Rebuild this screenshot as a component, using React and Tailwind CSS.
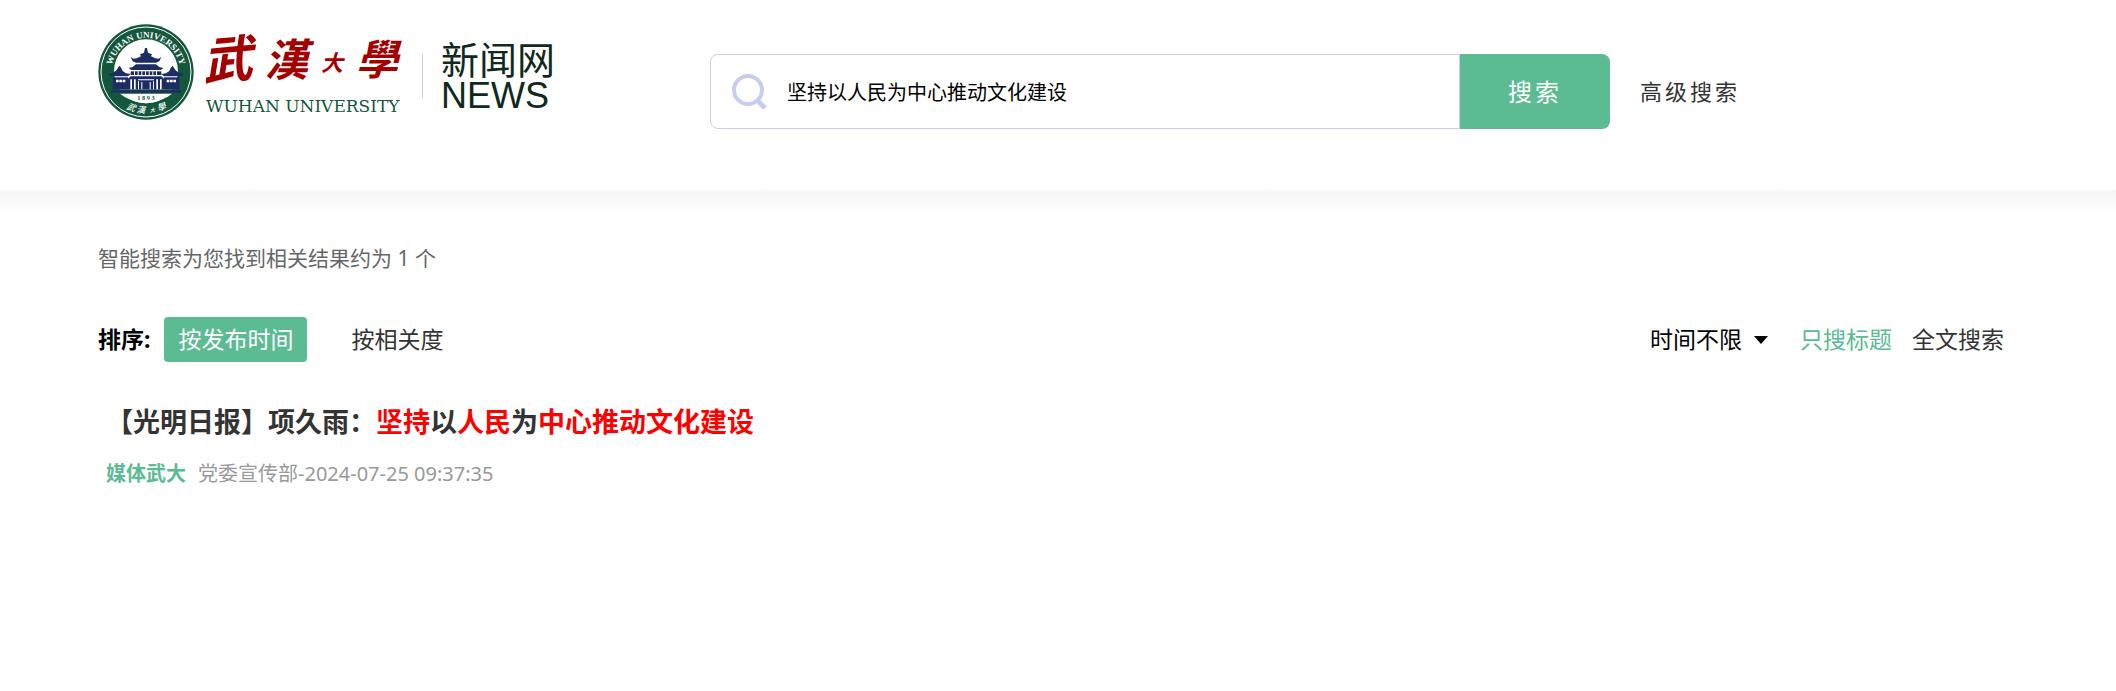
import React, { useState } from "react";

const FONT = "font-['Noto_Sans','Noto_Sans_CJK_SC',sans-serif]";

function Seal() {
  return (
    <svg viewBox="24 26 288 288" className="size-24 shrink-0" role="img" aria-label="武汉大学校徽">
      <circle cx="168" cy="170" r="143" fill="#14573c" />
      <circle cx="168" cy="170" r="135" fill="none" stroke="#ffffff" strokeWidth="3" />
      <circle cx="168" cy="168" r="96" fill="#ffffff" />
      <defs>
        <path id="seal-top" d="M66 192 A104 104 0 1 1 270 192" />
      </defs>
      <text fill="#ffffff" fontFamily="Liberation Serif, serif" fontWeight="700" fontSize="27">
        <textPath href="#seal-top" startOffset="50%" textAnchor="middle">WUHAN UNIVERSITY</textPath>
      </text>
      <g fill="#14573c">
        <path d="M60 222 H276 L262 240 H74 Z" />
      </g>
      <g fill="#ffffff" fontFamily="Noto Sans CJK TC, sans-serif" fontWeight="500" fontStyle="italic" fontSize="26" textAnchor="middle">
        <text transform="translate(120 285) rotate(20)">武</text>
        <text transform="translate(152 293) rotate(6)">漢</text>
        <text transform="translate(188 290) rotate(-6)" fontSize="16">大</text>
        <text transform="translate(218 284) rotate(-20)">學</text>
      </g>
      <g fill="#1d2c63">
        <path d="M162 112 L165 98 L171 98 L174 112 L186 117 L183 123 L196 129 L206 130 L214 125 L208 138 L198 142 H138 L128 138 L122 125 L130 130 L140 129 L153 123 L150 117 Z" />
        <path d="M138 147 H198 L208 155 L220 158 L212 164 H124 L116 158 L128 155 Z" />
        <path d="M84 158 L88 151 L94 158 L98 167 L108 174 L122 176 L114 183 H64 L54 176 L68 172 L78 166 Z" />
        <path d="M252 158 L248 151 L242 158 L238 167 L228 174 L214 176 L222 183 H272 L282 176 L268 172 L258 166 Z" />
        <rect x="122" y="168" width="92" height="11" />
        <path d="M122 183 H214 L222 190 V222 H114 V190 Z" />
        <rect x="68" y="186" width="46" height="36" />
        <rect x="222" y="186" width="46" height="36" />
        <rect x="64" y="225" width="208" height="7" />
      </g>
      <g fill="#ffffff">
        <path d="M132 168 h3 v11 h-3z M143 168 h3 v11 h-3z M154 168 h3 v11 h-3z M165 168 h3 v11 h-3z M176 168 h3 v11 h-3z M187 168 h3 v11 h-3z M198 168 h3 v11 h-3z" />
        <path d="M78 193 h8 v8 h-8z M88 193 h8 v8 h-8z M98 193 h8 v8 h-8z" />
        <path d="M230 193 h8 v8 h-8z M240 193 h8 v8 h-8z M250 193 h8 v8 h-8z" />
        <path d="M121 192 h5 v30 h-5z M132 192 h5 v30 h-5z M199 192 h5 v30 h-5z M210 192 h5 v30 h-5z" />
        <path d="M144 192 h48 v3 h-48z M144 198 h3 v24 h-3z M189 198 h3 v24 h-3z M154 200 h3 v22 h-3z M179 200 h3 v22 h-3z" />
      </g>
      <path d="M90 235 H246 A96 96 0 0 1 214 253 Q168 274 122 253 A96 96 0 0 1 90 235 Z" fill="#ffffff" />
      <text x="168" y="255" fill="#14573c" fontFamily="Liberation Serif, serif" fontWeight="700" fontSize="19" textAnchor="middle">
        1 8 9 3
      </text>
    </svg>
  );
}

function Logo() {
  return (
    <a href="#" className="flex items-center" aria-label="武汉大学新闻网">
      <Seal />
      <svg viewBox="0 0 208 96" className="ml-3 h-24 w-52 shrink-0">
        <g fill="#a40000" fontFamily="Noto Sans CJK TC, sans-serif" fontWeight="700" fontStyle="italic">
          <text x="-4" y="54" fontSize="50" transform="rotate(-5 20 34)">武</text>
          <text x="58" y="52" fontSize="44">漢</text>
          <text x="115" y="47" fontSize="22">大</text>
          <text x="150" y="51" fontSize="42">學</text>
        </g>
        <text x="0" y="88" fill="#14573c" fontFamily="DejaVu Serif, serif" fontSize="17">
          WUHAN UNIVERSITY
        </text>
      </svg>
      <span className="mt-2 ml-2 h-11 w-px bg-[#cccccc]" />
      <span className="mt-2 ml-[18px] flex flex-col text-[#0f2a1d]">
        <span className="font-['Noto_Sans_CJK_SC',sans-serif] text-[38px] leading-10">新闻网</span>
        <span className="font-['Liberation_Sans',sans-serif] text-4xl leading-9">NEWS</span>
      </span>
    </a>
  );
}

function SearchForm() {
  const [query, setQuery] = useState("坚持以人民为中心推动文化建设");
  return (
    <form className="flex items-center" onSubmit={(e) => e.preventDefault()}>
      <label className="flex h-[75px] w-[750px] items-center rounded-l-lg border border-[#c9cff0] pl-5">
        <span className="sr-only">搜索关键词</span>
        <svg viewBox="0 0 36 36" className="size-9 shrink-0" fill="none" stroke="#c7cdf0" aria-hidden="true">
          <circle cx="17" cy="16" r="14" strokeWidth="4" />
          <path d="M26 26 L34 34" strokeWidth="5" />
        </svg>
        <input
          className="ml-5 h-full min-w-0 flex-1 bg-transparent text-xl text-black outline-none"
          value={query}
          onChange={(e) => setQuery(e.target.value)}
        />
      </label>
      <button type="submit" className="h-[75px] w-[150px] rounded-r-lg bg-[#5bbb93] text-2xl tracking-[3px] text-white">
        搜索
      </button>
      <a href="#" className="ml-[30px] text-[22px] tracking-[3px] text-[#333333]">
        高级搜索
      </a>
    </form>
  );
}

function Mark({ children }) {
  return <em className="text-[#ff0000] not-italic">{children}</em>;
}

export default function App() {
  return (
    <div className={`${FONT} bg-white text-[#333333]`}>
      <header className="h-[190px] px-[98px] pt-6">
        <div className="flex items-start">
          <div className="w-[612px] shrink-0">
            <Logo />
          </div>
          <div className="pt-[30px]">
            <SearchForm />
          </div>
        </div>
      </header>
      <div className="h-6 bg-linear-to-b from-[#f5f5f5] to-white" />

      <main className="px-[98px] pt-7">
        <p className="text-[21px] leading-8 text-[#666666]">智能搜索为您找到相关结果约为 1 个</p>

        <div className="mt-[43px] flex h-[45px] items-center justify-between text-[23px]">
          <div className="flex items-center">
            <span className="font-bold text-black">排序:</span>
            <button type="button" className="ml-3.5 h-[45px] rounded bg-[#5bbb93] px-3.5 text-white">
              按发布时间
            </button>
            <button type="button" className="ml-11">按相关度</button>
          </div>
          <div className="flex items-center">
            <button type="button" className="flex items-center text-black">
              时间不限
              <svg viewBox="0 0 14 8" className="ml-3 h-2 w-3.5" fill="currentColor" aria-hidden="true">
                <path d="M0 0 H14 L7 8 Z" />
              </svg>
            </button>
            <button type="button" className="ml-8 text-[#5bbb93]">只搜标题</button>
            <button type="button" className="ml-5 mr-3.5">全文搜索</button>
          </div>
        </div>

        <article className="mt-10 px-2">
          <h3 className="text-[27px] leading-10 font-bold">
            <a href="#">
              【光明日报】项久雨：<Mark>坚持</Mark>以<Mark>人民</Mark>为<Mark>中心推动文化建设</Mark>
            </a>
          </h3>
          <p className="mt-4 flex items-center text-xl leading-8 text-[#999999]">
            <a href="#" className="mr-3 font-bold text-[#5bbb93]">媒体武大</a>
            <span>党委宣传部-2024-07-25 09:37:35</span>
          </p>
        </article>
      </main>
    </div>
  );
}
